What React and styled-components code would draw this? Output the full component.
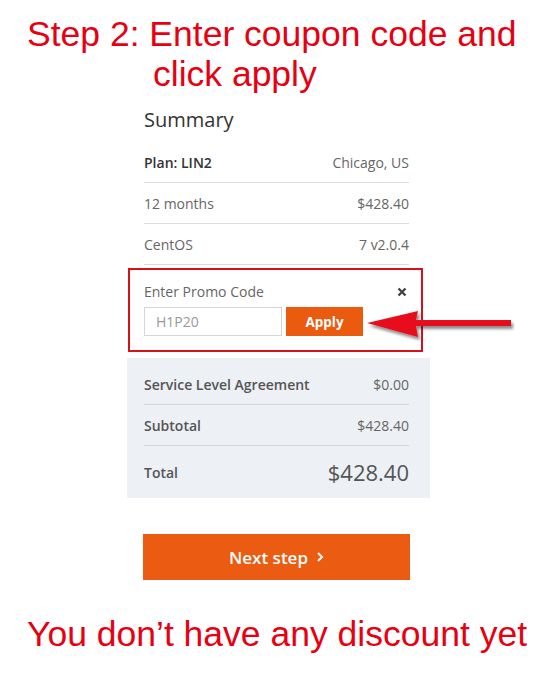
import React from 'react';
import styled, { createGlobalStyle } from 'styled-components';

const GlobalStyle = createGlobalStyle`
  body {
    margin: 0;
    background: #fff;
    font-family: "Open Sans", "Liberation Sans", sans-serif;
  }
`;

const Page = styled.div`
  position: relative;
  width: 560px;
  height: 700px;
  padding-top: 14px;
  box-sizing: border-box;
  overflow: hidden;
`;

const Note = styled.div`
  font-family: "Liberation Sans", Arial, sans-serif;
  font-size: 35.5px;
  line-height: 40px;
  color: #e60012;
  white-space: nowrap;
  padding-left: ${(p) => p.$indent}px;
`;

const Column = styled.div`
  margin-left: 127px;
  width: 303px;
`;

const Summary = styled.div`
  padding: 0 21px 0 17px;
`;

const Title = styled.h2`
  margin: 0 0 8px;
  padding-top: 12px;
  font-size: 20px;
  line-height: 28px;
  font-weight: 400;
  color: #333;
`;

const Row = styled.div`
  display: flex;
  justify-content: space-between;
  align-items: center;
  height: ${(p) => p.$height || 40}px;
  border-bottom: ${(p) => (p.$last ? 'none' : `1px solid ${p.$line || '#dcdcdc'}`)};
  font-size: 14px;
`;

const Label = styled.span`
  color: ${(p) => p.$color || '#666'};
  font-weight: ${(p) => (p.$strong ? 600 : 400)};
`;

const Value = styled.span`
  color: ${(p) => p.$color || '#666'};
  font-size: ${(p) => p.$size || 14}px;
`;

const PromoBox = styled.div`
  margin: 3px 7px 6px 1px;
  border: 2px solid #d9101c;
  padding: 11px 14px 14px 14px;
`;

const PromoHead = styled.div`
  display: flex;
  justify-content: space-between;
  align-items: center;
  height: 20px;
  margin-bottom: 6px;
  font-size: 14px;
  color: #666;
`;

const Close = styled.svg`
  width: 10px;
  height: 10px;
  margin-top: 2px;
`;

const PromoForm = styled.div`
  display: flex;
  gap: 4px;
`;

const Input = styled.input`
  box-sizing: border-box;
  width: 138px;
  height: 29px;
  border: 1px solid #d6d6d6;
  padding: 0 11px;
  font-family: inherit;
  font-size: 14px;
  color: #999;
  outline: none;
  &::placeholder {
    color: #999;
  }
`;

const ApplyButton = styled.button`
  width: 77px;
  height: 29px;
  border: none;
  background: #ea5a0f;
  color: #fff;
  font-family: inherit;
  font-size: 13.5px;
  font-weight: 700;
  padding: 0;
`;

const Totals = styled.div`
  background: #edf0f4;
  padding: 6px 21px 0 17px;
`;

const NextButton = styled.button`
  display: flex;
  align-items: center;
  justify-content: center;
  gap: 8px;
  box-sizing: border-box;
  margin: 36px 20px 0 16px;
  width: 267px;
  height: 46px;
  border: none;
  background: #ec5b12;
  color: #fff;
  font-family: inherit;
  font-size: 17px;
  font-weight: 600;
`;

const Footer = styled.div`
  margin-top: 34px;
`;

const Arrow = styled.svg`
  position: absolute;
  left: 360px;
  top: 304px;
  width: 160px;
  height: 42px;
  overflow: visible;
`;

const App = () => (
  <Page>
    <GlobalStyle />
    <Note $indent={27}>Step 2: Enter coupon code and</Note>
    <Note $indent={153}>click apply</Note>
    <Column>
      <Summary>
        <Title>Summary</Title>
        <Row>
          <Label $strong $color="#333">Plan: LIN2</Label>
          <Value>Chicago, US</Value>
        </Row>
        <Row>
          <Label>12 months</Label>
          <Value>$428.40</Value>
        </Row>
        <Row>
          <Label>CentOS</Label>
          <Value>7 v2.0.4</Value>
        </Row>
      </Summary>
      <PromoBox>
        <PromoHead>
          <span>Enter Promo Code</span>
          <Close viewBox="0 0 10 10">
            <path d="M1.5 1.5 L8.5 8.5 M8.5 1.5 L1.5 8.5" stroke="#444" strokeWidth="2.4" />
          </Close>
        </PromoHead>
        <PromoForm>
          <Input placeholder="H1P20" />
          <ApplyButton>Apply</ApplyButton>
        </PromoForm>
      </PromoBox>
      <Totals>
        <Row $line="#d3d6da">
          <Label $strong $color="#555">Service Level Agreement</Label>
          <Value>$0.00</Value>
        </Row>
        <Row $line="#d3d6da">
          <Label $strong $color="#555">Subtotal</Label>
          <Value>$428.40</Value>
        </Row>
        <Row $height={52} $last>
          <Label $strong $color="#555">Total</Label>
          <Value $size={22} $color="#555">$428.40</Value>
        </Row>
      </Totals>
      <NextButton>
        Next step
        <svg width="8" height="12" viewBox="0 0 8 12">
          <path d="M2 2 L6 6 L2 10" stroke="#fff" strokeWidth="2" fill="none" />
        </svg>
      </NextButton>
    </Column>
    <Footer>
      <Note $indent={27}>You don’t have any discount yet</Note>
    </Footer>
    <Arrow viewBox="0 0 160 42">
      <defs>
        <filter id="shadow" x="-10%" y="-30%" width="130%" height="180%">
          <feDropShadow dx="2" dy="3" stdDeviation="1.5" floodColor="#000" floodOpacity="0.45" />
        </filter>
      </defs>
      <path
        d="M7 19 L58 7 L56 16 L151 16 L151 22 L56 22 L58 33 Z"
        fill="#e8101a"
        filter="url(#shadow)"
      />
    </Arrow>
  </Page>
);

export default App;
